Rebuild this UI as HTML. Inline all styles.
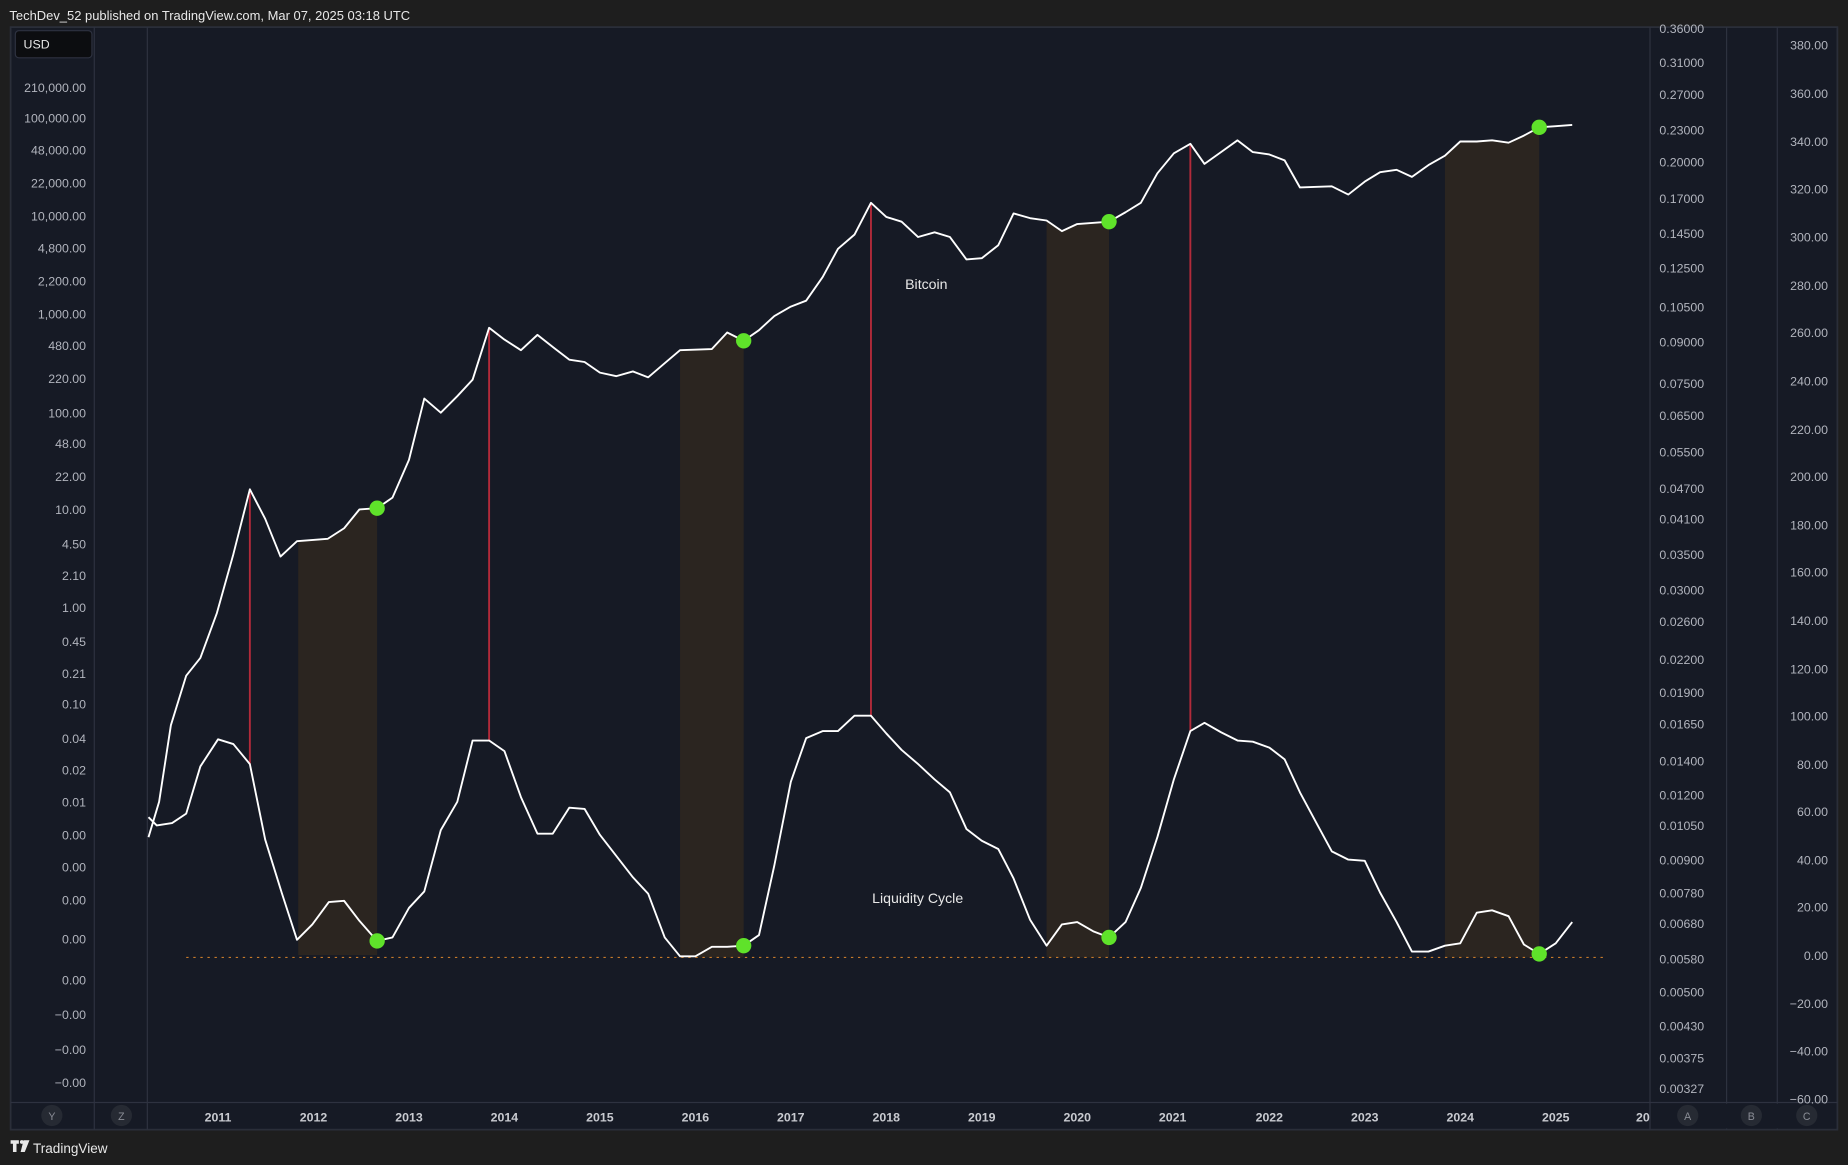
<!DOCTYPE html>
<html><head><meta charset="utf-8"><style>
html,body{margin:0;padding:0;background:#1e1e1e;width:1848px;height:1165px;overflow:hidden}
svg{display:block}
text{font-family:"Liberation Sans",sans-serif}
</style></head><body>
<svg width="1848" height="1165" viewBox="0 0 1568 988" preserveAspectRatio="none">
<rect x="0" y="0" width="1568" height="988" fill="#1e1e1e"/>
<text x="8" y="17" font-size="11" fill="#e8e8e8">TechDev_52 published on TradingView.com, Mar 07, 2025 03:18 UTC</text>
<rect x="9" y="23" width="1550" height="935" fill="#161a25" stroke="#2a2e39" stroke-width="1.5"/>
<g stroke="#2e3240" stroke-width="1">
<line x1="80" y1="23" x2="80" y2="958"/>
<line x1="125" y1="23" x2="125" y2="958"/>
<line x1="1400" y1="23" x2="1400" y2="958"/>
<line x1="1465" y1="23" x2="1465" y2="958"/>
<line x1="1508" y1="23" x2="1508" y2="958"/>
<line x1="9" y1="935" x2="1559" y2="935"/>
</g>
<rect x="13" y="26" width="65" height="23" rx="3" fill="#0c0d10" stroke="#2e3240"/>
<text x="20" y="41" font-size="10.5" fill="#e8e8e8">USD</text>
<g font-size="10.5" fill="#b2b5be" text-anchor="end">
<text x="73" y="78">210,000.00</text><text x="73" y="104">100,000.00</text><text x="73" y="131">48,000.00</text><text x="73" y="159">22,000.00</text><text x="73" y="187">10,000.00</text><text x="73" y="214">4,800.00</text><text x="73" y="242">2,200.00</text><text x="73" y="270">1,000.00</text><text x="73" y="297">480.00</text><text x="73" y="325">220.00</text><text x="73" y="354">100.00</text><text x="73" y="380">48.00</text><text x="73" y="408">22.00</text><text x="73" y="436">10.00</text><text x="73" y="465">4.50</text><text x="73" y="492">2.10</text><text x="73" y="519">1.00</text><text x="73" y="548">0.45</text><text x="73" y="575">0.21</text><text x="73" y="601">0.10</text><text x="73" y="630">0.04</text><text x="73" y="657">0.02</text><text x="73" y="684">0.01</text><text x="73" y="712">0.00</text><text x="73" y="739">0.00</text><text x="73" y="767">0.00</text><text x="73" y="800">0.00</text><text x="73" y="835">0.00</text><text x="73" y="864">−0.00</text><text x="73" y="894">−0.00</text><text x="73" y="922">−0.00</text>
</g>
<g font-size="10.5" fill="#b2b5be">
<text x="1408" y="28">0.36000</text><text x="1408" y="57">0.31000</text><text x="1408" y="84">0.27000</text><text x="1408" y="114">0.23000</text><text x="1408" y="141">0.20000</text><text x="1408" y="172">0.17000</text><text x="1408" y="202">0.14500</text><text x="1408" y="231">0.12500</text><text x="1408" y="264">0.10500</text><text x="1408" y="294">0.09000</text><text x="1408" y="329">0.07500</text><text x="1408" y="356">0.06500</text><text x="1408" y="387">0.05500</text><text x="1408" y="418">0.04700</text><text x="1408" y="444">0.04100</text><text x="1408" y="474">0.03500</text><text x="1408" y="504">0.03000</text><text x="1408" y="531">0.02600</text><text x="1408" y="563">0.02200</text><text x="1408" y="591">0.01900</text><text x="1408" y="618">0.01650</text><text x="1408" y="649">0.01400</text><text x="1408" y="678">0.01200</text><text x="1408" y="704">0.01050</text><text x="1408" y="733">0.00900</text><text x="1408" y="761">0.00780</text><text x="1408" y="787">0.00680</text><text x="1408" y="817">0.00580</text><text x="1408" y="845">0.00500</text><text x="1408" y="874">0.00430</text><text x="1408" y="901">0.00375</text><text x="1408" y="927">0.00327</text>
</g>
<g font-size="10.5" fill="#b2b5be" text-anchor="end">
<text x="1551" y="42">380.00</text><text x="1551" y="83">360.00</text><text x="1551" y="124">340.00</text><text x="1551" y="164">320.00</text><text x="1551" y="205">300.00</text><text x="1551" y="246">280.00</text><text x="1551" y="286">260.00</text><text x="1551" y="327">240.00</text><text x="1551" y="368">220.00</text><text x="1551" y="408">200.00</text><text x="1551" y="449">180.00</text><text x="1551" y="489">160.00</text><text x="1551" y="530">140.00</text><text x="1551" y="571">120.00</text><text x="1551" y="611">100.00</text><text x="1551" y="652">80.00</text><text x="1551" y="692">60.00</text><text x="1551" y="733">40.00</text><text x="1551" y="773">20.00</text><text x="1551" y="814">0.00</text><text x="1551" y="855">−20.00</text><text x="1551" y="895">−40.00</text><text x="1551" y="936">−60.00</text>
</g>
<rect x="1401" y="936" width="157" height="21" fill="#161a25"/>
<g font-size="10.5" fill="#c8cad0" font-weight="bold" text-anchor="middle">
<text x="185" y="951">2011</text><text x="266" y="951">2012</text><text x="347" y="951">2013</text><text x="428" y="951">2014</text><text x="509" y="951">2015</text><text x="590" y="951">2016</text><text x="671" y="951">2017</text><text x="752" y="951">2018</text><text x="833" y="951">2019</text><text x="914" y="951">2020</text><text x="995" y="951">2021</text><text x="1077" y="951">2022</text><text x="1158" y="951">2023</text><text x="1239" y="951">2024</text><text x="1320" y="951">2025</text><text x="1394" y="951">20</text>
</g>
<g fill="#262a33"><circle cx="44" cy="946" r="9"/><circle cx="103" cy="946" r="9"/><circle cx="1432" cy="946" r="9"/><circle cx="1486" cy="946" r="9"/><circle cx="1533" cy="946" r="9"/></g>
<g font-size="9" fill="#8a8d96" text-anchor="middle"><text x="44" y="950">Y</text><text x="103" y="950">Z</text><text x="1432" y="950">A</text><text x="1486" y="950">B</text><text x="1533" y="950">C</text></g>
<g fill="#2b2520">
<polygon points="253,459 278,457 292,448 305,432 320,431 320,810 253,810"/>
<polygon points="577,297 604,296 617,282 631,289 631,812 577,812"/>
<polygon points="888,187 901,196 914,190 941,188 941,812 888,812"/>
<polygon points="1226,132 1239,120 1253,120 1266,119 1280,121 1293,115 1306,108 1306,812 1226,812"/>
</g>
<g stroke="#b22a3a" stroke-width="1.6">
<line x1="212" y1="415" x2="212" y2="648"/><line x1="415" y1="278" x2="415" y2="628"/><line x1="739" y1="172" x2="739" y2="607"/><line x1="1010" y1="122" x2="1010" y2="620"/>
</g>
<line x1="158" y1="812" x2="1360" y2="812" stroke="#c77a2a" stroke-width="1" stroke-dasharray="2,4"/>
<g fill="none" stroke="#ffffff" stroke-width="1.6" stroke-linejoin="round">
<polyline points="126,710 135,680 145,615 158,573 170,558 184,520 198,470 212,415 225,440 238,472 252,459 278,457 292,448 305,432 320,431 333,422 347,390 360,338 374,350 388,336 401,322 415,278 428,288 442,297 456,284 470,295 483,305 496,307 509,316 523,319 537,315 550,320 564,308 577,297 604,296 617,282 631,289 644,280 657,268 671,260 684,255 698,235 711,211 725,199 739,172 752,184 765,188 779,201 793,197 806,201 820,220 833,219 847,208 860,181 874,185 888,187 901,196 914,190 941,188 955,180 968,172 982,147 996,130 1010,122 1022,139 1036,129 1050,119 1063,129 1077,131 1090,136 1103,159 1130,158 1144,165 1158,154 1171,146 1185,144 1198,150 1212,140 1226,132 1239,120 1253,120 1266,119 1280,121 1293,115 1306,108 1320,107 1334,106"/>
<polyline points="126,693 133,700 146,698 158,690 170,650 185,627 198,631 212,648 225,712 239,757 252,797 265,784 279,765 292,764 305,781 320,798 333,795 347,770 360,756 374,704 388,680 401,628 415,628 428,637 442,676 456,707 469,707 483,685 496,686 509,708 523,726 537,744 550,758 564,795 577,811 590,811 604,803 617,803 631,802 644,793 657,734 671,663 684,626 698,620 711,620 725,607 739,607 752,622 765,636 779,648 793,661 806,672 820,703 833,713 847,720 860,745 874,780 888,802 901,784 914,782 928,790 941,795 955,782 968,753 982,710 996,661 1010,620 1022,613 1036,621 1050,628 1063,629 1077,634 1090,644 1103,672 1117,698 1130,722 1144,729 1158,730 1171,757 1185,782 1198,807 1212,807 1226,802 1239,800 1253,774 1266,772 1280,777 1293,801 1306,809 1320,800 1334,782"/>
</g>
<g fill="#5fe22a"><circle cx="320" cy="431" r="6.5"/><circle cx="631" cy="289" r="6.5"/><circle cx="941" cy="188" r="6.5"/><circle cx="1306" cy="108" r="6.5"/><circle cx="320" cy="798" r="6.5"/><circle cx="631" cy="802" r="6.5"/><circle cx="941" cy="795" r="6.5"/><circle cx="1306" cy="809" r="6.5"/></g>
<text x="768" y="245" font-size="12" fill="#e8e8e8">Bitcoin</text>
<text x="740" y="766" font-size="12" fill="#e8e8e8">Liquidity Cycle</text>
<g fill="#e8e8e8"><path d="M9,967 h7 v3 h-2 v7 h-3 v-7 h-2z"/><circle cx="18.5" cy="968.5" r="1.6"/><path d="M20,967 h5 l-4,10 h-3.5z"/></g>
<text x="28" y="978" font-size="11.5" fill="#e8e8e8">TradingView</text>
</svg>
</body></html>
